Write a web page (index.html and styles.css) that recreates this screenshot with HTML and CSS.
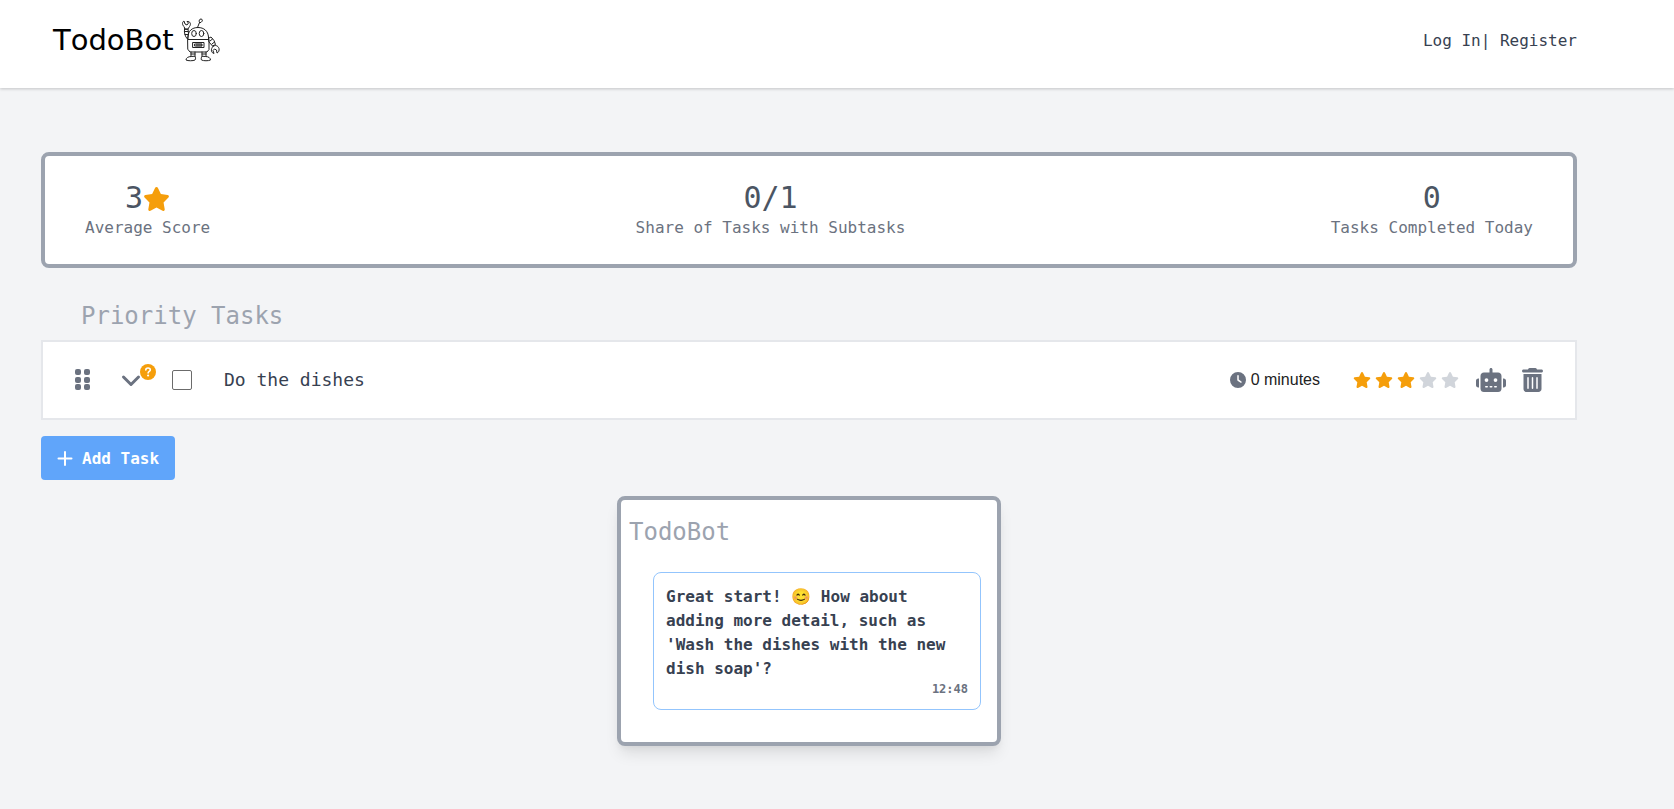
FILE: index.html
```
<!DOCTYPE html>
<html lang="en">
<head>
<meta charset="utf-8">
<title>TodoBot</title>
<link rel="stylesheet" href="styles.css">
</head>
<body>
<svg class="defs" aria-hidden="true">
  <symbol id="star" viewBox="0 0 576 512"><path d="M316.9 18C311.6 7 300.4 0 288.1 0s-23.4 7-28.8 18L195 150.3 51.4 171.5c-12 1.8-22 10.2-25.7 21.7s-.7 24.2 7.9 32.7L137.8 329 113.2 474.7c-2 12 3 24.2 12.9 31.3s23 8 33.8 2.3l128.3-68.5 128.3 68.5c10.8 5.7 23.9 4.9 33.8-2.3s14.9-19.3 12.9-31.3L438.5 329 542.7 225.9c8.6-8.5 11.7-21.2 7.9-32.7s-13.7-19.9-25.7-21.7L381.2 150.3 316.9 18z"/></symbol>
</svg>
<header class="header">
  <a class="brand" href="#">
    <span class="brand-name">TodoBot</span>
    <svg class="brand-robot" viewBox="0 0 38 44" aria-hidden="true">
      <g fill="none" stroke="#222" stroke-width="1" stroke-linejoin="round" stroke-linecap="round">
        <path d="M6 21.500V19C6 13 10 9.500 16 9.500S26 13 26.500 19v2.500"/>
        <path d="M6 21.500h21v10l-2 2.500H8l-2-2.500z" fill="#fff"/>
        <ellipse cx="12" cy="15.500" rx="2.300" ry="3"/><ellipse cx="19.500" cy="15.500" rx="2.300" ry="3"/>
        <path d="M11 24.500h11v5H11zM13 26h7v2h-7zM15 26v2M17 26v2M19 26v2"/>
        <path d="M15.500 9.500 17.500 4.500M17.500 4.500c-1-2 0-3.500 1.500-3.500s2 2 .5 3z"/>
        <path d="M3 11 2 8.500C0 7 0 4 2 3l1 3 2 1 1.500-2L5 3.500c3-.5 4.500 2.500 2.500 5L6 11zM2.500 11h3.500l.5 5-1 5C3 18.500 2 15 2.500 11zM2.500 13.500H6M3 16.500h3"/>
        <path d="M27 20l2-1 3 3.500 1.500 4-3 1.500-3.500-4zM28 23l2.500-2M30 26l2.500-2M31 28.500c2-2 5-1 6 2 .5 2-.5 4-2 4.500l-.5-3-2-1-1.500 1.500 1 3c-2.500-.5-4-4-1-7z"/>
        <path d="M9 34v4.500M13 34v4.500M9 36h4M20 34v4.500M24 34v4.500M20 36h4M9 38.500c-3 0-5 1.500-5 3.500 2 1 7 1 9 0 .8-1 .8-2.500 0-3.500zM20 38.500c-1 1-1 2.500-.5 3.500 2 1 7 1 9 0 0-2-2-3.500-4.500-3.500z"/>
      </g>
    </svg>
  </a>
  <nav class="nav"><a href="#">Log In</a>| <a href="#">Register</a></nav>
</header>
<main class="main">
  <section class="stats">
    <div class="stat"><div class="stat-value">3<svg class="stat-star"><use href="#star"/></svg></div><div class="stat-label">Average Score</div></div>
    <div class="stat"><div class="stat-value">0/1</div><div class="stat-label">Share of Tasks with Subtasks</div></div>
    <div class="stat"><div class="stat-value">0</div><div class="stat-label">Tasks Completed Today</div></div>
  </section>
  <h2 class="heading">Priority Tasks</h2>
  <div class="task">
    <button class="icon-button grip" aria-label="Reorder">
      <svg width="16" height="24" viewBox="0 0 16 24" fill="currentColor"><rect x="0" y="1" width="6" height="6" rx="2"/><rect x="9" y="1" width="6" height="6" rx="2"/><rect x="0" y="9" width="6" height="6" rx="2"/><rect x="9" y="9" width="6" height="6" rx="2"/><rect x="0" y="16" width="6" height="6" rx="2"/><rect x="9" y="16" width="6" height="6" rx="2"/></svg>
    </button>
    <button class="icon-button expand" aria-label="Show subtasks">
      <svg width="20" height="24" viewBox="0 0 20 24" fill="none" stroke="currentColor" stroke-width="3" stroke-linecap="round" stroke-linejoin="round"><path d="m2.500 9 7.500 7.500L17.500 9"/></svg>
      <svg class="badge" viewBox="0 0 16 16" aria-hidden="true"><circle cx="8" cy="8" r="8" fill="#f59e0b"/><path d="M5.800 6C5.800 4.600 6.700 4 8 4c1.400 0 2.300.8 2.300 2S8.100 7.600 8.100 9" fill="none" stroke="#fff" stroke-width="1.600" stroke-linecap="round"/><circle cx="8.100" cy="11.500" r="1.100" fill="#fff"/></svg>
    </button>
    <input class="check" type="checkbox" id="task-1">
    <label class="task-name" for="task-1">Do the dishes</label>
    <div class="duration">
      <svg width="16" height="16" viewBox="0 0 512 512" fill="#6b7280" aria-hidden="true"><path d="M256 0a256 256 0 1 1 0 512A256 256 0 1 1 256 0zM232 120V256c0 8 4 15.500 10.700 20l96 64c11 7.400 25.900 4.400 33.300-6.700s4.400-25.900-6.700-33.300L280 243.200V120c0-13.300-10.700-24-24-24s-24 10.700-24 24z"/></svg>
      <span>0 minutes</span>
    </div>
    <div class="rating" role="img" aria-label="3 of 5 stars">
      <svg class="on"><use href="#star"/></svg><svg class="on"><use href="#star"/></svg><svg class="on"><use href="#star"/></svg><svg><use href="#star"/></svg><svg><use href="#star"/></svg>
    </div>
    <button class="icon-button robot" aria-label="Ask TodoBot">
      <svg width="30" height="24" viewBox="0 0 640 512" fill="currentColor"><path d="M320 0c17.700 0 32 14.300 32 32V96H472c39.800 0 72 32.200 72 72V440c0 39.800-32.200 72-72 72H168c-39.800 0-72-32.200-72-72V168c0-39.800 32.200-72 72-72H288V32c0-17.700 14.300-32 32-32zM208 384c-8.800 0-16 7.200-16 16s7.200 16 16 16h32c8.800 0 16-7.200 16-16s-7.200-16-16-16H208zm96 0c-8.800 0-16 7.200-16 16s7.200 16 16 16h32c8.800 0 16-7.200 16-16s-7.200-16-16-16H304zm96 0c-8.800 0-16 7.200-16 16s7.200 16 16 16h32c8.800 0 16-7.200 16-16s-7.200-16-16-16H400zM264 256a40 40 0 1 0 -80 0 40 40 0 1 0 80 0zm152 40a40 40 0 1 0 0-80 40 40 0 1 0 0 80zM48 224H64V416H48c-26.500 0-48-21.500-48-48V272c0-26.500 21.500-48 48-48zm544 0c26.500 0 48 21.500 48 48v96c0 26.500-21.500 48-48 48H576V224h16z"/></svg>
    </button>
    <button class="icon-button trash" aria-label="Delete task">
      <svg width="21" height="24" viewBox="0 0 448 512" fill="currentColor"><path d="M135.200 17.700C140.600 6.800 151.700 0 163.800 0H284.200c12.100 0 23.200 6.800 28.600 17.700L320 32h96c17.700 0 32 14.300 32 32s-14.300 32-32 32H32C14.300 96 0 81.700 0 64S14.300 32 32 32h96l7.200-14.300zM32 128H416V448c0 35.300-28.700 64-64 64H96c-35.300 0-64-28.700-64-64V128zm96 64c-8.800 0-16 7.200-16 16V432c0 8.800 7.200 16 16 16s16-7.200 16-16V208c0-8.800-7.200-16-16-16zm96 0c-8.800 0-16 7.200-16 16V432c0 8.800 7.200 16 16 16s16-7.200 16-16V208c0-8.800-7.200-16-16-16zm96 0c-8.800 0-16 7.200-16 16V432c0 8.800 7.200 16 16 16s16-7.200 16-16V208c0-8.800-7.200-16-16-16z"/></svg>
    </button>
  </div>
  <button class="add">
    <svg width="16" height="16" viewBox="0 0 16 16" fill="none" stroke="#fff" stroke-width="2" stroke-linecap="round" aria-hidden="true"><path d="M8 1v13M1.500 7.500h13"/></svg>
    <span>Add Task</span>
  </button>
  <section class="chat">
    <h2 class="chat-title">TodoBot</h2>
    <div class="bubble">
      <p class="message">Great start! 😊 How about adding more detail, such as 'Wash the dishes with the new dish soap'?</p>
      <time class="time">12:48</time>
    </div>
  </section>
</main>
</body>
</html>
```
FILE: styles.css
```
* { box-sizing: border-box; }
body {
  margin: 0;
  min-height: 100vh;
  background: #f3f4f6;
  color: #374151;
  font: 16px/24px "DejaVu Sans Mono", monospace;
}
h2, p { margin: 0; }
svg { display: block; flex: none; }
a { color: inherit; text-decoration: none; }
button { font: inherit; border: 0; cursor: pointer; }
.defs { position: absolute; width: 0; height: 0; }

.header {
  display: flex;
  justify-content: space-between;
  padding: 17px 97px 25px 53px;
  background: #fff;
  box-shadow: 0 1px 3px rgba(0, 0, 0, .2);
}
.brand { display: flex; align-items: center; gap: 8px; color: #000; }
.brand-name { font: 29px/46px "DejaVu Sans", sans-serif; font-kerning: none; }
.brand-robot { width: 38px; height: 44px; }
.nav { padding-top: 12px; white-space: pre; }

.main {
  display: flex;
  flex-direction: column;
  padding: 64px 97px 62px 41px;
}
.stats {
  display: flex;
  justify-content: space-between;
  padding: 24px 40px;
  background: #fff;
  border: 4px solid #9ca3af;
  border-radius: 8px;
  text-align: center;
}
.stat-value {
  display: flex;
  align-items: flex-end;
  justify-content: center;
  color: #4b5563;
  font-size: 30px;
  line-height: 36px;
}
.stat-star { width: 27px; height: 24px; margin-bottom: 5px; fill: #f59e0b; }
.stat-label { color: #6b7280; }
.heading {
  margin: 32px 40px 8px;
  color: #9ca3af;
  font-size: 24px;
  font-weight: 400;
  line-height: 32px;
}
.task {
  display: flex;
  align-items: center;
  height: 80px;
  padding: 0 32px;
  background: #fff;
  border: 2px solid #e5e7eb;
}
.icon-button { padding: 0; background: none; color: #6b7280; }
.expand { position: relative; margin-left: 30px; }
.badge { position: absolute; top: -4px; left: 19px; width: 16px; height: 16px; }
.check {
  appearance: none;
  width: 20px;
  height: 20px;
  margin: 0 0 0 31px;
  background: #fff;
  border: 1px solid #6b6b6b;
  border-radius: 2px;
}
.task-name { flex: 1; margin-left: 32px; font-size: 18px; }
.duration {
  display: flex;
  align-items: center;
  gap: 5px;
  color: #222;
  font-family: "Liberation Sans", Arial, sans-serif;
}
.rating { display: flex; gap: 4px; margin: 0 17px 0 33px; }
.rating svg { width: 18px; height: 16px; fill: #d1d5db; }
.rating .on { fill: #f59e0b; }
.trash { margin-left: 16px; }
.add {
  display: flex;
  align-items: center;
  align-self: flex-start;
  gap: 9px;
  margin: 16px 0;
  padding: 11px 16px 9px;
  background: #60a5fa;
  border-radius: 4px;
  color: #fff;
  font-weight: 700;
}
.chat {
  align-self: center;
  width: 384px;
  max-width: 100%;
  padding: 16px 16px 32px 8px;
  background: #fff;
  border: 4px solid #9ca3af;
  border-radius: 8px;
  box-shadow: 0 10px 15px -3px rgba(0, 0, 0, .1), 0 4px 6px -2px rgba(0, 0, 0, .05);
}
.chat-title { color: #9ca3af; font-size: 24px; font-weight: 400; line-height: 32px; }
.bubble {
  margin: 24px 0 0 24px;
  padding: 12px;
  border: 1px solid #93c5fd;
  border-radius: 8px;
  font-weight: 700;
}
.time {
  display: block;
  color: #6b7280;
  font-size: 12px;
  line-height: 16px;
  text-align: right;
}
```
